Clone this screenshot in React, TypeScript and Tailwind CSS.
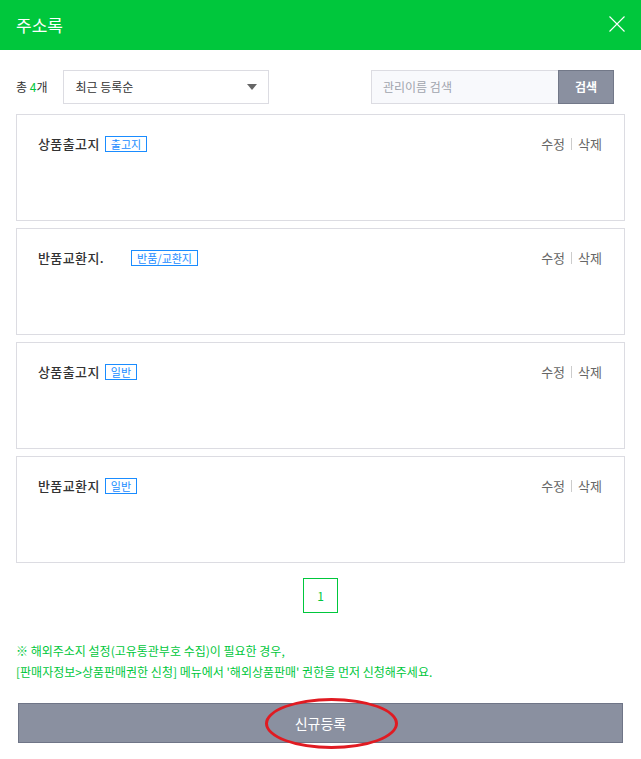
const font = { fontFamily: '"Noto Sans CJK KR", "Noto Sans", sans-serif' };

type Address = { name: string; badge: string; wide?: boolean };

const addresses: Address[] = [
  { name: "상품출고지", badge: "출고지" },
  { name: "반품교환지.", badge: "반품/교환지", wide: true },
  { name: "상품출고지", badge: "일반" },
  { name: "반품교환지", badge: "일반" },
];

function AddressCard({ item }: { item: Address }) {
  return (
    <div className="flex h-[107px] items-start justify-between border border-[#dcdce2] pl-[21px] pr-[22px] pt-[20px]">
      <div className="flex items-center">
        <span className="text-[13px] font-medium leading-[18px] tracking-[0.4px] text-[#333]">{item.name}</span>
        <span
          className={
            item.wide
              ? "ml-[27px] flex h-[16px] items-center border border-[#1a8cff] px-[5px] text-[11px] text-[#1a8cff]"
              : "ml-[5px] flex h-[16px] items-center border border-[#1a8cff] px-[5px] text-[11px] text-[#1a8cff]"
          }
        >
          {item.badge}
        </span>
      </div>
      <div className="flex items-center text-[13px] leading-[18px] text-[#666]">
        <span>수정</span>
        <span className="mx-[6px] h-[12px] w-px bg-[#ccc]" />
        <span>삭제</span>
      </div>
    </div>
  );
}

export default function App() {
  return (
    <div className="h-[759px] w-[641px] bg-white" style={font}>
      <div className="flex h-[50px] items-center justify-between bg-[#00c73c] pl-[16px] pr-[16px]">
        <h1 className="text-[17px] font-normal text-white">주소록</h1>
        <svg width="16" height="16" viewBox="0 0 16 16" className="mt-[-2px]">
          <path d="M0.5 0.5L15.5 15.5M15.5 0.5L0.5 15.5" stroke="white" strokeWidth="1.1" />
        </svg>
      </div>

      <div className="flex items-center justify-between px-[16px] pt-[20px]">
        <div className="flex items-center">
          <span className="text-[12px] text-[#333]">
            총 <span className="text-[#00c73c]">4</span>개
          </span>
          <div className="ml-[16px] flex h-[34px] w-[206px] items-center justify-between border border-[#dcdce2] pl-[11px] pr-[11px]">
            <span className="text-[12px] text-[#333]">최근 등록순</span>
            <svg width="10" height="6" viewBox="0 0 10 6">
              <path d="M0 0H10L5 6Z" fill="#666" />
            </svg>
          </div>
        </div>
        <div className="mr-[11px] flex h-[34px]">
          <div className="flex w-[187px] items-center border border-r-0 border-[#dcdce2] bg-[#f8f9fc] pl-[11px] text-[12px] text-[#a0a4ad]">
            관리이름 검색
          </div>
          <button className="w-[56px] border border-[#727888] bg-[#8a90a0] text-[12px] font-bold text-white">검색</button>
        </div>
      </div>

      <div className="mt-[10px] flex flex-col gap-[7px] px-[16px]">
        {addresses.map((a, i) => (
          <AddressCard key={i} item={a} />
        ))}
      </div>

      <div className="mt-[15px] flex justify-center">
        <div className="flex h-[35px] w-[35px] items-center justify-center border border-[#00c73c] text-[12px] text-[#00c73c]">1</div>
      </div>

      <div className="mt-[27px] px-[16px] text-[12px] leading-[21px] text-[#00c73c]">
        <p>※ 해외주소지 설정(고유통관부호 수집)이 필요한 경우,</p>
        <p>[판매자정보&gt;상품판매권한 신청] 메뉴에서 '해외상품판매' 권한을 먼저 신청해주세요.</p>
      </div>

      <div className="mt-[21px] px-[18px]">
        <div className="relative flex h-[40px] items-center justify-center border border-[#6f7587] bg-[#8a90a0]">
          <span className="text-[14px] text-white">신규등록</span>
          <span className="absolute left-[246px] top-[-6px] h-[51px] w-[133px] rounded-[50%] border-[3px] border-[#e01b22]" />
        </div>
      </div>
    </div>
  );
}
